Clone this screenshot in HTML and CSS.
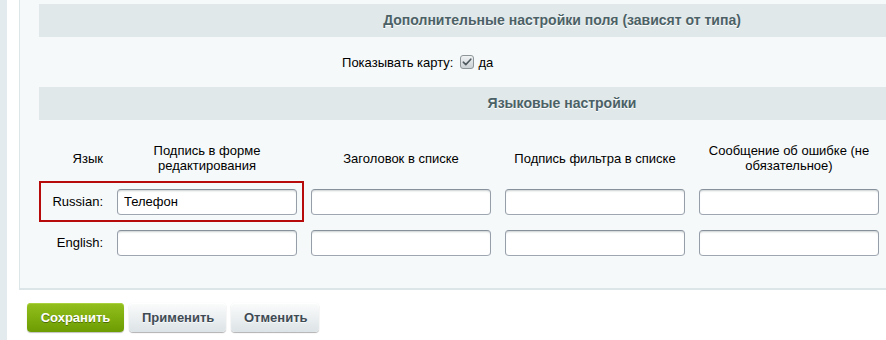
FILE: index.html
```html
<!DOCTYPE html>
<html lang="ru">
<head>
<meta charset="utf-8">
<title>Настройки поля</title>
<link rel="stylesheet" href="styles.css">
</head>
<body>
<div class="page">
  <div class="side-strip"></div>
  <div class="side-gap"></div>
  <div class="main">
    <div class="panel">
      <div class="section-head">Дополнительные настройки поля (зависят от типа)</div>
      <div class="field-row">
        <div class="field-label">Показывать карту:</div>
        <div class="field-value">
          <span class="checkbox">
            <svg width="14" height="14" viewBox="0 0 14 14">
              <defs>
                <linearGradient id="cb" x1="0" y1="0" x2="0" y2="1">
                  <stop offset="0" stop-color="#f1f3f4"/>
                  <stop offset="1" stop-color="#c9d0d3"/>
                </linearGradient>
              </defs>
              <rect x="0.5" y="0.5" width="13" height="13" rx="2.5" fill="url(#cb)" stroke="#8d9599"/>
              <path d="M3.3 7.2 L5.8 9.6 L10.8 4.2" fill="none" stroke="#4f5a60" stroke-width="1.6" stroke-linecap="round" stroke-linejoin="round"/>
            </svg>
          </span>
          <span>да</span>
        </div>
      </div>
      <div class="section-head">Языковые настройки</div>
      <div class="lang-grid">
        <div class="lh lh-lang c1">Язык</div>
        <div class="lh c2">Подпись в форме<br>редактирования</div>
        <div class="lh c3">Заголовок в списке</div>
        <div class="lh c4">Подпись фильтра в списке</div>
        <div class="lh c5">Сообщение об ошибке (не<br>обязательное)</div>

        <div class="highlight"></div>
        <div class="ll row-ru c1">Russian:</div>
        <div class="lc row-ru c2"><input class="txt" type="text" value="Телефон"></div>
        <div class="lc row-ru c3"><input class="txt" type="text"></div>
        <div class="lc row-ru c4"><input class="txt" type="text"></div>
        <div class="lc row-ru c5"><input class="txt" type="text"></div>

        <div class="ll row-en c1">English:</div>
        <div class="lc row-en c2"><input class="txt" type="text"></div>
        <div class="lc row-en c3"><input class="txt" type="text"></div>
        <div class="lc row-en c4"><input class="txt" type="text"></div>
        <div class="lc row-en c5"><input class="txt" type="text"></div>
      </div>
    </div>
    <div class="buttons">
      <button class="btn btn-save" type="button">Сохранить</button>
      <button class="btn btn-apply" type="button">Применить</button>
      <button class="btn btn-cancel" type="button">Отменить</button>
    </div>
  </div>
</div>
</body>
</html>
```
FILE: styles.css
```css
html, body {
  margin: 0;
  padding: 0;
  background: #ffffff;
  overflow: hidden;
}
body {
  font-family: "Liberation Sans", Arial, sans-serif;
  font-size: 13px;
  color: #000;
}
.page {
  display: flex;
  width: 886px;
  height: 340px;
  overflow: hidden;
}
.side-strip {
  flex: 0 0 7px;
  background: #e4ebee;
}
.side-gap {
  flex: 0 0 12px;
  background: #ffffff;
}
.main {
  flex: 0 0 auto;
  display: flex;
  flex-direction: column;
}
.panel {
  width: 1065px;
  box-sizing: border-box;
  background: #f5f9f9;
  border-left: 1px solid #dce5e8;
  border-bottom: 2px solid #dce5e8;
  padding: 4px 0 25px 19px;
}
.section-head {
  width: 1046px;
  height: 33px;
  background: #e0e8ea;
  color: #4b6166;
  font-size: 14px;
  font-weight: bold;
  text-align: center;
  line-height: 33px;
  text-shadow: 0 1px #fff;
}
.field-row {
  display: flex;
  width: 1046px;
  height: 50px;
  align-items: center;
}
.field-label {
  flex: 0 0 40%;
  box-sizing: border-box;
  text-align: right;
  padding-right: 4px;
}
.field-value {
  display: flex;
  align-items: center;
  gap: 4px;
}
.checkbox {
  display: inline-flex;
  width: 14px;
  height: 14px;
  margin-left: 3px;
}
.lang-grid {
  display: grid;
  grid-template-columns: 71px 194px 194px 194px 194px;
  grid-template-rows: 46px 41px 41px;
  margin-top: 15px;
  align-items: center;
}
.c1 { grid-column: 1; }
.c2 { grid-column: 2; }
.c3 { grid-column: 3; }
.c4 { grid-column: 4; }
.c5 { grid-column: 5; }
.lh {
  text-align: center;
  line-height: 15px;
  grid-row: 1;
}
.lh-lang {
  text-align: right;
  padding-right: 7px;
}
.ll {
  text-align: right;
  padding-right: 7px;
}
.lc {
  display: flex;
  justify-content: center;
}
.row-ru { grid-row: 2; }
.row-en { grid-row: 3; }
.highlight {
  grid-column: 1 / 3;
  grid-row: 2;
  align-self: stretch;
  border: 2px solid #b70b0b;
}
.txt {
  width: 180px;
  height: 26px;
  box-sizing: border-box;
  border: 1px solid;
  border-color: #87919c #959ea9 #9ea7b1 #959ea9;
  border-radius: 4px;
  background: #ffffff;
  box-shadow: 0 1px 0 0 rgba(255,255,255,0.3), inset 0 2px 2px -1px rgba(180,188,191,0.7);
  font-family: "Liberation Sans", Arial, sans-serif;
  font-size: 13px;
  color: #000;
  padding: 0 6px;
  margin: 0;
  outline: none;
}
.buttons {
  display: flex;
  gap: 5px;
  margin: 13px 0 0 8px;
}
.btn {
  height: 29px;
  box-sizing: border-box;
  padding: 0 13px;
  border: none;
  border-radius: 4px;
  background: linear-gradient(#fbfcfc, #dce3e6);
  box-shadow: 0 0 1px rgba(0,0,0,0.11), 0 1px 1px rgba(0,0,0,0.3), inset 0 1px #fff, inset 0 0 1px rgba(255,255,255,0.5);
  color: #3f4b54;
  font-family: "Liberation Sans", Arial, sans-serif;
  font-size: 13px;
  font-weight: bold;
  text-shadow: 0 1px rgba(255,255,255,0.7);
  cursor: pointer;
}
.btn-save {
  width: 97px;
  background: linear-gradient(#93c01d, #6c9c02);
  box-shadow: 0 1px 1px rgba(0,0,0,0.25), inset 0 1px #a9d13e;
  color: #ffffff;
  text-shadow: 0 1px rgba(0,0,0,0.35);
}
.btn-apply { width: 97px; }
.btn-cancel { width: 88px; }
```
